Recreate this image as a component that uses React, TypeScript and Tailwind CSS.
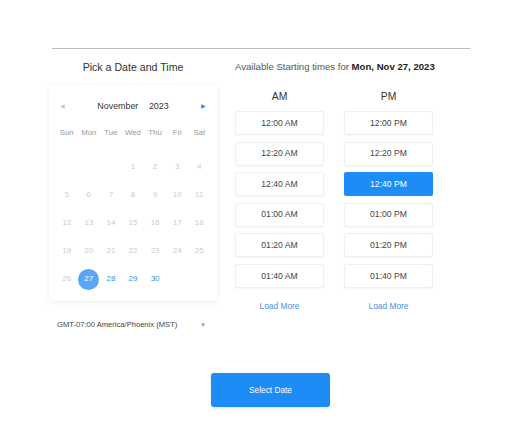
import React from "react";

const amTimes = ["12:00 AM", "12:20 AM", "12:40 AM", "01:00 AM", "01:20 AM", "01:40 AM"];
const pmTimes = ["12:00 PM", "12:20 PM", "12:40 PM", "01:00 PM", "01:20 PM", "01:40 PM"];
const weekdays = ["Sun", "Mon", "Tue", "Wed", "Thu", "Fri", "Sat"];

function TimeBox({ label, active }: { label: string; active?: boolean }) {
  return (
    <div
      className={
        active
          ? "h-[24px] w-[89px] rounded-[2px] bg-[#1e8cf7] text-white flex items-center justify-center text-[8.6px]"
          : "h-[24px] w-[89px] rounded-[2px] border border-[#efefef] bg-white text-[#444] flex items-center justify-center text-[8.6px] shadow-[0_1px_2px_rgba(0,0,0,0.04)]"
      }
    >
      {label}
    </div>
  );
}

export default function App() {
  const cells: (number | null)[] = [null, null, null];
  for (let d = 1; d <= 30; d++) cells.push(d);
  while (cells.length < 35) cells.push(null);

  return (
    <div
      className="w-[515px] h-[431px] bg-white overflow-hidden"
      style={{ fontFamily: '"Liberation Sans", Arial, sans-serif' }}
    >
      <div className="pt-[48px]">
        <div className="ml-[52px] w-[418px] h-px bg-[#bdbdbd]" />
      </div>
      <div className="flex pl-[48px] pt-[11px]">
        {/* Left column */}
        <div className="w-[170px] flex flex-col">
          <div className="h-[14px] leading-[14px] text-center text-[10.6px] text-[#333]">
            Pick a Date and Time
          </div>
          <div className="mt-[11px] ml-px w-[168px] h-[216px] bg-white shadow-[0_1px_6px_rgba(0,0,0,0.07)] px-[6.7px] pt-[14.7px]">
            <div className="h-[14px] flex items-center justify-between px-[4px]">
              <span className="text-[6px] text-[#c8c8c8]">◀</span>
              <div className="flex items-center gap-[10.6px] text-[8.9px] text-[#333]">
                <span>November</span>
                <span>2023</span>
              </div>
              <span className="text-[6px] text-[#1e8cf7]">▶</span>
            </div>
            <div className="mt-[12.3px] grid grid-cols-7 h-[14px] items-center">
              {weekdays.map((w) => (
                <div key={w} className="text-center text-[7.8px] text-[#999]">
                  {w}
                </div>
              ))}
            </div>
            <div className="mt-[12.5px] grid grid-cols-7 auto-rows-[28.2px]">
              {cells.map((c, i) => (
                <div key={i} className="flex items-center justify-center">
                  {c === null ? null : c === 27 ? (
                    <div className="w-[21px] h-[21px] rounded-full bg-[#5aa5f5] text-white text-[8px] flex items-center justify-center">
                      27
                    </div>
                  ) : (
                    <span className={c > 27 ? "text-[8px] text-[#3c8fe3]" : "text-[8px] text-[#cccccc]"}>{c}</span>
                  )}
                </div>
              ))}
            </div>
          </div>
          <div className="mt-[17px] h-[14px] flex items-center pl-[9px] pr-[12px] justify-between">
            <span className="text-[7.6px] text-[#444]">GMT-07:00 America/Phoenix (MST)</span>
            <span className="text-[6px] text-[#999]">▼</span>
          </div>
        </div>
        {/* Right column */}
        <div className="ml-[17px] flex flex-col">
          <div className="h-[14px] leading-[14px] text-[9.6px] text-[#555] whitespace-nowrap">
            Available Starting times for <span className="font-bold text-[#222]">Mon, Nov 27, 2023</span>
          </div>
          <div className="flex gap-[20px] mt-[16px]">
            <div className="flex flex-col w-[89px]">
              <div className="h-[14px] leading-[14px] text-center text-[10.4px] text-[#333]">AM</div>
              <div className="mt-[7px] flex flex-col gap-[6.6px]">
                {amTimes.map((t) => (
                  <TimeBox key={t} label={t} />
                ))}
              </div>
              <div className="mt-[12px] h-[12px] leading-[12px] text-center text-[8.4px] text-[#4a90e2]">Load More</div>
            </div>
            <div className="flex flex-col w-[89px]">
              <div className="h-[14px] leading-[14px] text-center text-[10.4px] text-[#333]">PM</div>
              <div className="mt-[7px] flex flex-col gap-[6.6px]">
                {pmTimes.map((t) => (
                  <TimeBox key={t} label={t} active={t === "12:40 PM"} />
                ))}
              </div>
              <div className="mt-[12px] h-[12px] leading-[12px] text-center text-[8.4px] text-[#4a90e2]">Load More</div>
            </div>
          </div>
        </div>
      </div>
      <div className="mt-[41px] ml-[211px] w-[119px] h-[34px] rounded-[3px] bg-[#1e8cf7] text-white text-[8.3px] flex items-center justify-center shadow-[0_1px_3px_rgba(0,0,0,0.12)]">
        Select Date
      </div>
    </div>
  );
}
